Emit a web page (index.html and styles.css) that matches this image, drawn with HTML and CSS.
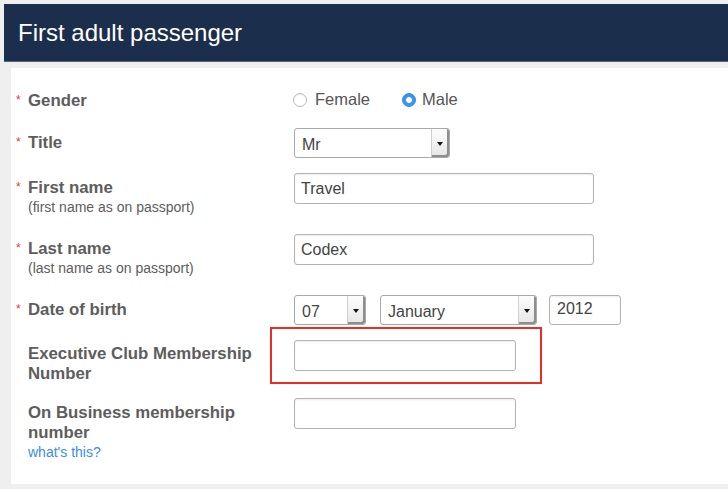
FILE: index.html
```html
<!DOCTYPE html>
<html lang="en">
<head>
<meta charset="UTF-8" />
<title>First adult passenger</title>
<link rel="stylesheet" href="styles.css">
</head>
<body>
  <div class="page">
    <h1 class="banner">First adult passenger</h1>

    <form class="panel">
      <div class="row">
        <label class="label"><span class="req">*</span>Gender</label>
        <div class="radios">
          <span class="option"><span class="radio"></span>Female</span>
          <span class="option"><span class="radio checked"></span>Male</span>
        </div>
      </div>

      <div class="row">
        <label class="label"><span class="req">*</span>Title</label>
        <div class="select title-select">Mr<span class="arrow"></span></div>
      </div>

      <div class="row">
        <label class="label"><span class="req">*</span>First name
          <span class="sub">(first name as on passport)</span></label>
        <input class="field wide" type="text" value="Travel">
      </div>

      <div class="row">
        <label class="label"><span class="req">*</span>Last name
          <span class="sub">(last name as on passport)</span></label>
        <input class="field wide" type="text" value="Codex">
      </div>

      <div class="row">
        <label class="label"><span class="req">*</span>Date of birth</label>
        <div class="dob">
          <div class="select day-select">07<span class="arrow"></span></div>
          <div class="select month-select">January<span class="arrow"></span></div>
          <input class="field year" type="text" value="2012">
        </div>
      </div>

      <div class="row exec">
        <label class="label">Executive Club Membership Number</label>
        <input class="field medium" type="text">
        <!-- annotation box over the membership field -->
        <span class="highlight"></span>
      </div>

      <div class="row">
        <label class="label">On Business membership number
          <a class="help" href="#">what's this?</a></label>
        <input class="field medium" type="text">
      </div>
    </form>
  </div>
</body>
</html>
```

FILE: styles.css
```css
* { box-sizing: border-box; }
body { margin: 0; background: #efefef; font-family: 'Liberation Sans', Arial, sans-serif; color: #5d5d5d; }
.page { padding: 4px 0 0 4px; height: 489px; overflow: hidden; }

/* header bar */
.banner {
  margin: 0;
  height: 58px;
  padding: 1px 0 0 14px;
  background: #1b2f4d;
  border-bottom: 1px solid #5a6779;
  color: #ffffff;
  font-size: 24px;
  font-weight: normal;
  line-height: 56px;
}

/* form panel */
.panel { margin: 6px 0 0 7px; background: #ffffff; padding: 18px 0 23px 0; }
.row { position: relative; display: flex; align-items: flex-start; padding-left: 5px; margin-bottom: 15px; }
.row:last-child { margin-bottom: 0; }
.row.exec .label { padding-top: 4px; }

.label { flex-shrink: 0; width: 278px; padding: 5px 16px 0 12px; font-size: 16.8px; font-weight: bold; line-height: 20px; color: #5d5d5d; }
.row.exec { margin-bottom: 14px; }
.req { display: inline-block; width: 12px; margin-left: -12px; color: #e5373a; font-size: 12px; font-weight: normal; vertical-align: top; line-height: 18px; }
.sub { display: block; font-size: 14px; font-weight: normal; line-height: 18px; margin-bottom: 3px; }
.help { display: block; font-size: 14px; font-weight: normal; line-height: 18px; color: #3a8ee3; text-decoration: none; }

/* radios */
.radios { display: flex; align-items: center; height: 27px; font-size: 16.5px; color: #555; }
.option { display: flex; align-items: center; }
.option:first-child { margin-left: -1px; margin-right: 32px; }
.radio { width: 14px; height: 14px; border-radius: 50%; border: 1px solid #b9b9b9; background: #fff; box-shadow: inset 0 1px 1px rgba(0,0,0,0.08); margin-right: 8px; }
.radio.checked { border-color: #3490f3; background: #3a95f6 radial-gradient(circle, #fff 0 2.6px, transparent 3.2px); margin-right: 6px; }

/* selects and inputs */
.select {
  position: relative;
  height: 30px;
  border: 1px solid #a9a9a9;
  border-radius: 3px;
  padding-left: 7px;
  font-size: 16px;
  line-height: 32px;
  color: #444;
  background: #fff;
}
.arrow {
  position: absolute;
  top: 0;
  right: 0;
  bottom: 0;
  width: 18px;
  background: linear-gradient(#fdfdfd, #e6e6e6);
  border-left: 1px solid #cfcfcf;
  box-shadow: inset -2px -2px 0 #8e8e8e;
  border-radius: 0 2px 2px 0;
}
.arrow::after {
  content: '';
  position: absolute;
  top: 13px;
  left: 5px;
  border-left: 3.5px solid transparent;
  border-right: 3.5px solid transparent;
  border-top: 4px solid #111;
}
.title-select { width: 156px; }
.dob { display: flex; }
.day-select { width: 72px; margin-right: 14px; }
.month-select { width: 157px; margin-right: 12px; }

.field {
  height: 31px;
  border: 1px solid #b3b3b3;
  border-radius: 3px;
  box-shadow: inset 0 1px 2px rgba(0,0,0,0.08);
  padding: 0 6px;
  font-family: inherit;
  font-size: 16px;
  color: #444;
  background: #fff;
  outline: none;
}
.field.wide { width: 300px; }
.field.medium { width: 222px; }
.field.year { width: 72px; height: 30px; padding: 0 7px 2px; line-height: 28px; }

/* red annotation frame */
.highlight { position: absolute; left: 259px; top: -13px; width: 272px; height: 57px; border: 2px solid #ea2c25; }
```
